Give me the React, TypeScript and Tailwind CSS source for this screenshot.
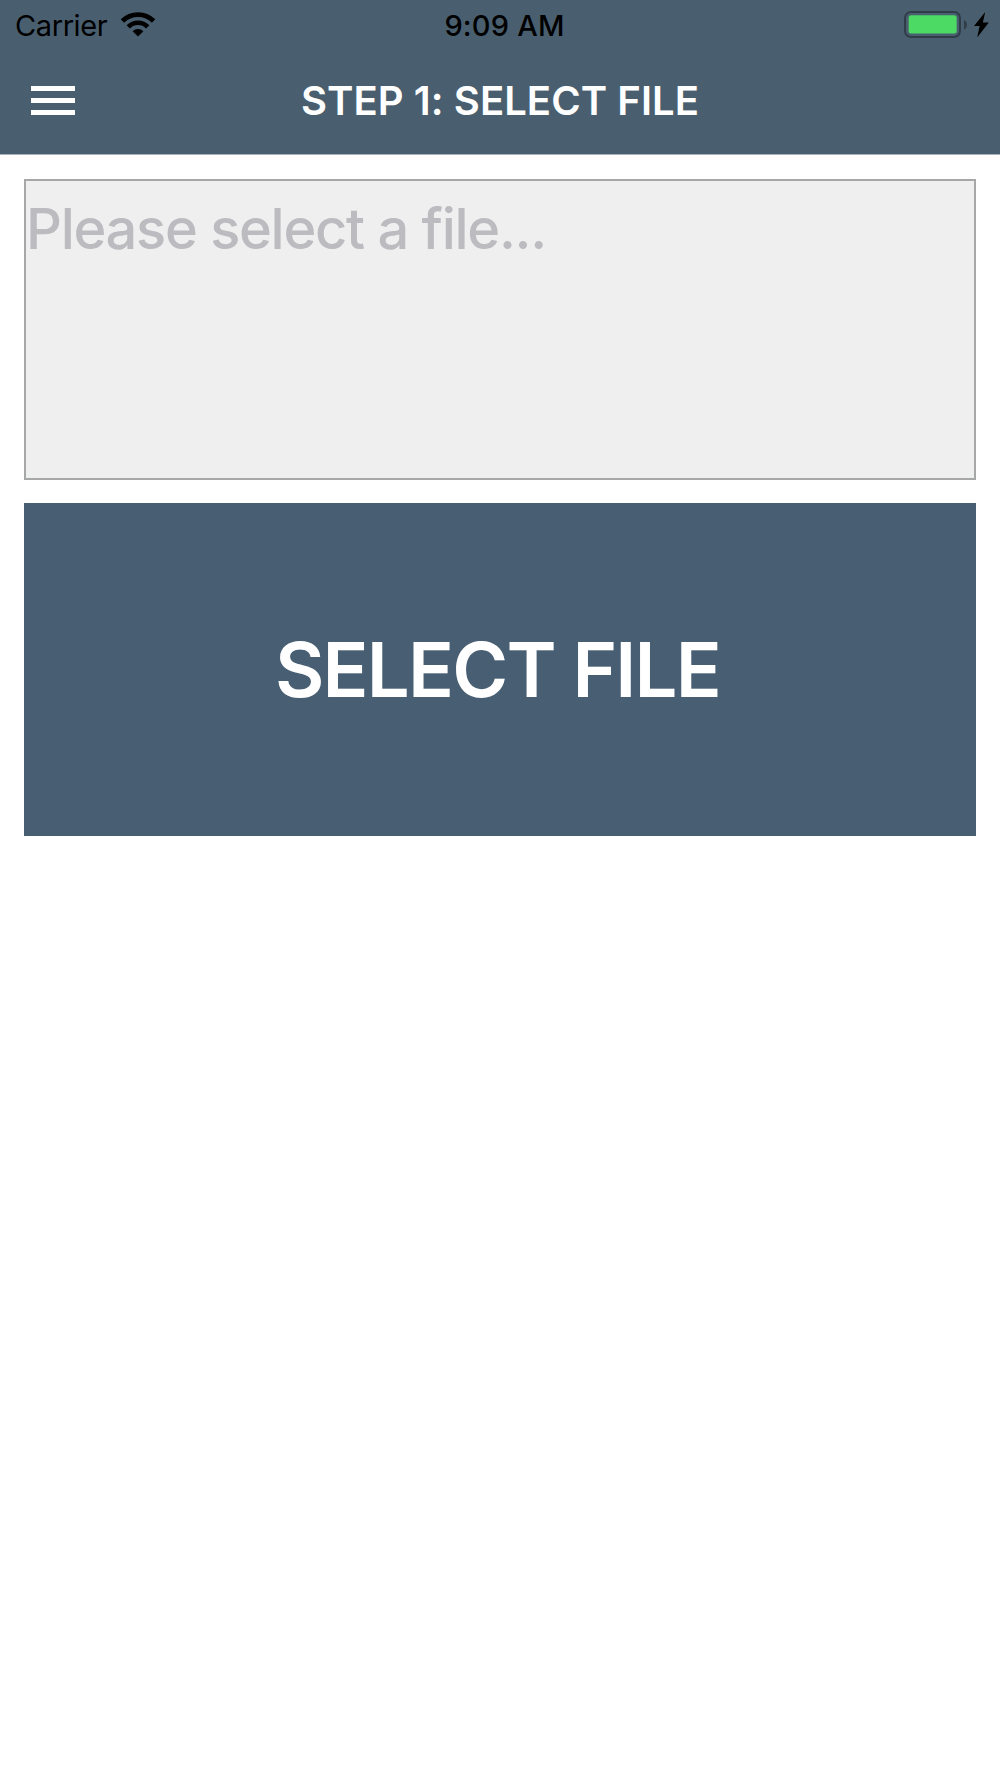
import { useState } from 'react'

function WifiIcon() {
  return (
    <svg width="36" height="25" viewBox="0 0 36 25" className="absolute top-[12px] left-[120px]">
      <path d="M2.4 9 A22.1 22.1 0 0 1 33.6 9" fill="none" stroke="#000" strokeWidth="4.8" />
      <path d="M8.25 14.85 A13.8 13.8 0 0 1 27.75 14.85" fill="none" stroke="#000" strokeWidth="4.6" />
      <path d="M12.6 19.2 A7.6 7.6 0 0 1 23.4 19.2 L18 24.6 Z" fill="#000" />
    </svg>
  )
}

function BatteryIcon() {
  return (
    <svg width="86" height="28" viewBox="0 0 86 28">
      <rect x="1" y="1" width="55" height="25" rx="6" fill="none" stroke="#303d49" strokeWidth="2" />
      <rect x="4.7" y="4.3" width="48" height="18.2" rx="2.5" fill="#4cd964" />
      <path d="M60 8.7 Q63 10.5 63 13.7 Q63 16.9 60 18.7 Z" fill="#303d49" />
      <path d="M81.2 1 L70 15 H75.6 L73.2 26.5 L84.8 11.6 H78.9 Z" fill="#000" />
    </svg>
  )
}

function StatusBar() {
  return (
    <div className="relative grid h-[50px] grid-cols-3 text-[29px] leading-[52px] text-black">
      <div className="pl-[15px]">
        <span className="tracking-[-0.4px]">Carrier</span>
        <WifiIcon />
      </div>
      <div className="pl-[9px] text-center font-medium tracking-[0.2px]">9:09 AM</div>
      <div className="flex h-[50px] items-center justify-end pr-[10px]">
        <BatteryIcon />
      </div>
    </div>
  )
}

interface HeaderProps {
  title: string
}

function Header({ title }: HeaderProps) {
  return (
    <header className="h-[155px] border-b border-[#a9b0b6] bg-[#495f6f]">
      <StatusBar />
      <div className="grid h-[101px] grid-cols-[200px_1fr_200px] items-center">
        <button className="ml-[31px] flex w-11 flex-col gap-[7px]" aria-label="Menu">
          <span className="h-[5px] w-full bg-white"></span>
          <span className="h-[5px] w-full bg-white"></span>
          <span className="h-[5px] w-full bg-white"></span>
        </button>
        <h1 className="pt-px text-center text-[40px] font-semibold tracking-[0.08px] whitespace-nowrap text-white">{title}</h1>
      </div>
    </header>
  )
}

export default function App() {
  const [fileName] = useState('')

  return (
    <div className="min-h-[1778px] bg-white font-['Inter',sans-serif]">
      <Header title="STEP 1: SELECT FILE" />

      <main className="flex flex-col gap-[23px] px-6 pt-6">
        {/* Selected file */}
        <div className="h-[301px] border-2 border-[#a6a7a7] bg-[#efefef] pt-[14px] text-[56px] leading-[68px] font-medium tracking-[-1.3px] text-[#bbbbc0]">
          {fileName || 'Please select a file...'}
        </div>

        <button className="h-[333px] bg-[#485e72] pr-[5px] pb-[2px] text-[76px] font-semibold tracking-[-1.75px] text-white">
          SELECT FILE
        </button>
      </main>
    </div>
  )
}
